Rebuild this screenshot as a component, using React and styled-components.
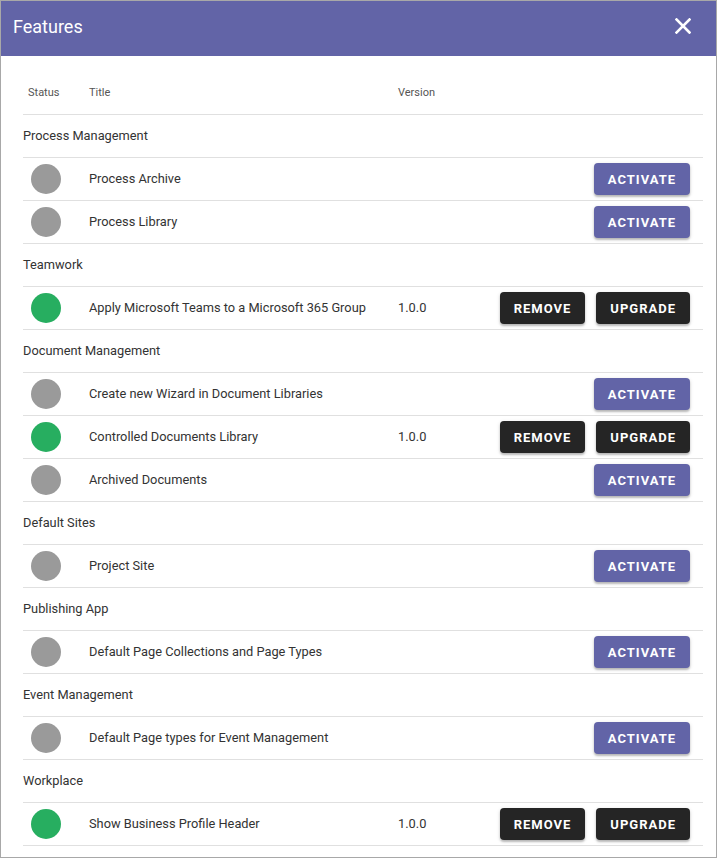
import React from 'react';
import styled, { createGlobalStyle } from 'styled-components';

const GlobalStyle = createGlobalStyle`
  html, body {
    margin: 0;
    padding: 0;
    background: #fff;
  }
  body {
    font-family: Roboto, "Liberation Sans", Arial, sans-serif;
    color: #333;
  }
`;

const Dialog = styled.div`
  width: 717px;
  height: 858px;
  box-sizing: border-box;
  border: 1px solid #a8a8a8;
  background: #fff;
  overflow: hidden;
  display: flex;
  flex-direction: column;
`;

const Header = styled.div`
  height: 55px;
  box-sizing: border-box;
  flex: none;
  background: #6264a7;
  display: flex;
  align-items: center;
  justify-content: space-between;
  padding: 0 21px 5px 12px;
`;

const Title = styled.h1`
  margin: 0;
  font-size: 18px;
  font-weight: 400;
  color: #fff;
`;

const CloseButton = styled.button`
  border: none;
  background: transparent;
  padding: 0;
  width: 24px;
  height: 24px;
  display: flex;
  align-items: center;
  justify-content: center;
  cursor: pointer;
`;

const Content = styled.div`
  padding: 15px 13px 0 22px;
`;

const Table = styled.table`
  width: 100%;
  table-layout: fixed;
  border-collapse: collapse;
  font-size: 12.8px;
`;

const HeadCell = styled.th`
  height: 43px;
  padding: 0 0 0 ${({ $pad }) => $pad || 0}px;
  text-align: left;
  font-size: 11px;
  font-weight: 400;
  color: #555;
  width: ${({ $w }) => ($w ? `${$w}px` : 'auto')};
`;

const Row = styled.tr`
  height: 43px;
  border-bottom: 1px solid #e0e0e0;
`;

const GroupCell = styled.td`
  padding: 0 0 1px;
  color: #333;
`;

const Cell = styled.td`
  padding: 0 0 1px;
  color: #333;
`;

const ActionCell = styled.td`
  padding: 0 13px 0 0;
`;

const StatusDot = styled.span`
  display: block;
  width: 30px;
  height: 30px;
  margin-left: 8px;
  border-radius: 50%;
  background: ${({ $active }) => ($active ? '#27ae60' : '#9a9a9a')};
`;

const Actions = styled.div`
  display: flex;
  justify-content: flex-end;
  gap: 11px;
`;

const ActionButton = styled.button`
  height: 32px;
  padding: 0 14px;
  border: none;
  border-radius: 4px;
  font-family: Roboto, "Liberation Sans", Arial, sans-serif;
  font-size: 13px;
  font-weight: 700;
  letter-spacing: 1px;
  color: #fff;
  background: ${({ $dark }) => ($dark ? '#252525' : '#6264a7')};
  box-shadow: 0 2px 2px rgba(0, 0, 0, 0.22), 0 1px 4px rgba(0, 0, 0, 0.12);
  cursor: pointer;
`;

const groups = [
  {
    name: 'Process Management',
    items: [
      { title: 'Process Archive' },
      { title: 'Process Library' },
    ],
  },
  {
    name: 'Teamwork',
    items: [{ title: 'Apply Microsoft Teams to a Microsoft 365 Group', version: '1.0.0' }],
  },
  {
    name: 'Document Management',
    items: [
      { title: 'Create new Wizard in Document Libraries' },
      { title: 'Controlled Documents Library', version: '1.0.0' },
      { title: 'Archived Documents' },
    ],
  },
  {
    name: 'Default Sites',
    items: [{ title: 'Project Site' }],
  },
  {
    name: 'Publishing App',
    items: [{ title: 'Default Page Collections and Page Types' }],
  },
  {
    name: 'Event Management',
    items: [{ title: 'Default Page types for Event Management' }],
  },
  {
    name: 'Workplace',
    items: [{ title: 'Show Business Profile Header', version: '1.0.0' }],
  },
];

const CloseIcon = () => (
  <svg width="16" height="16" viewBox="0 0 16 16">
    <path d="M1.5 1.5 L14.5 14.5 M14.5 1.5 L1.5 14.5" stroke="#fff" strokeWidth="2.6" strokeLinecap="square" />
  </svg>
);

const FeatureRow = ({ item }) => {
  const installed = Boolean(item.version);
  return (
    <Row>
      <Cell>
        <StatusDot $active={installed} />
      </Cell>
      <Cell>{item.title}</Cell>
      <Cell>{item.version}</Cell>
      <ActionCell>
        <Actions>
          {installed ? (
            <>
              <ActionButton $dark>REMOVE</ActionButton>
              <ActionButton $dark>UPGRADE</ActionButton>
            </>
          ) : (
            <ActionButton>ACTIVATE</ActionButton>
          )}
        </Actions>
      </ActionCell>
    </Row>
  );
};

export default function App() {
  return (
    <>
      <GlobalStyle />
      <Dialog>
        <Header>
          <Title>Features</Title>
          <CloseButton aria-label="Close">
            <CloseIcon />
          </CloseButton>
        </Header>
        <Content>
          <Table>
            <thead>
              <Row>
                <HeadCell $w={61} $pad={5}>Status</HeadCell>
                <HeadCell $w={309}>Title</HeadCell>
                <HeadCell $w={90}>Version</HeadCell>
                <HeadCell />
              </Row>
            </thead>
            <tbody>
              {groups.map((g) => (
                <React.Fragment key={g.name}>
                  <Row>
                    <GroupCell colSpan={4}>{g.name}</GroupCell>
                  </Row>
                  {g.items.map((item) => (
                    <FeatureRow key={item.title} item={item} />
                  ))}
                </React.Fragment>
              ))}
            </tbody>
          </Table>
        </Content>
      </Dialog>
    </>
  );
}
